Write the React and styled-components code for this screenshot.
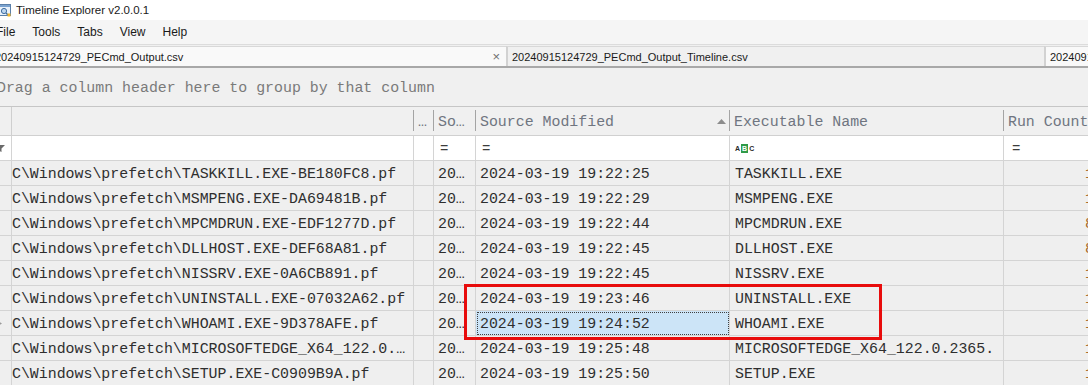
import React from "react";
import styled, { createGlobalStyle } from "styled-components";

const Global = createGlobalStyle`
  html, body {
    margin: 0;
    padding: 0;
    background: #ffffff;
    overflow: hidden;
  }
`;

const mono = `"Liberation Mono", "DejaVu Sans Mono", monospace`;
const sans = `"Liberation Sans", Arial, sans-serif`;

const Window = styled.div`
  position: relative;
  width: 1088px;
  height: 385px;
  overflow: hidden;
  background: #f0f0f0;
  font-family: ${sans};
`;

const TitleBar = styled.div`
  height: 20px;
  display: flex;
  align-items: center;
  gap: 5px;
  background: #ffffff;
  font-size: 11.5px;
  color: #1a1a1a;

  svg {
    margin-left: -2px;
  }
`;

const MenuBar = styled.div`
  height: 24px;
  display: flex;
  align-items: center;
  gap: 17px;
  background: #f5f5f5;
  font-size: 12px;
  color: #1a1a1a;

  span:first-child {
    margin-left: -4px;
  }
`;

const TabStrip = styled.div`
  height: 24px;
  display: flex;
  box-sizing: border-box;
  border-top: 1px solid #dcdcdc;
  border-bottom: 2px solid #a8a8a8;
  background: #f0f0f0;
  font-size: 11px;
  color: #1a1a1a;
`;

const Tab = styled.div`
  flex: 0 0 ${(p) => p.$w}px;
  margin-left: ${(p) => p.$ml || 0}px;
  display: flex;
  align-items: center;
  justify-content: space-between;
  box-sizing: border-box;
  padding: 0 4px;
  margin-top: 1px;
  border-top: 1px solid #d8d8d8;
  border-left: ${(p) => (p.$first ? "none" : "2px solid #d2d2d2")};
  background: ${(p) => (p.$active ? "#f9f9f9" : "#f0f0f0")};
  white-space: nowrap;
  overflow: hidden;
`;

const Close = styled.span`
  color: #707070;
  font-size: 13px;
  margin-right: 2px;
`;

const GroupPanel = styled.div`
  height: 39px;
  box-sizing: border-box;
  display: flex;
  align-items: center;
  padding-top: 2px;
  border-bottom: 1px solid #c6c6c6;
  font-family: ${mono};
  font-size: 14.9px;
  color: #7a7a7a;
  white-space: nowrap;

  span {
    margin-left: -3px;
  }
`;

const Grid = styled.div`
  display: grid;
  grid-template-columns: 12px 402px 20px 42px 254px 274px 97px;
  width: 1101px;
  font-family: ${mono};
  font-size: 14.9px;
`;

const HeadCell = styled.div`
  height: 29px;
  box-sizing: border-box;
  display: flex;
  align-items: center;
  justify-content: space-between;
  padding: 1px 4px 0;
  border-bottom: 1px solid #d0d0d0;
  color: #6f7580;
  white-space: nowrap;
  overflow: hidden;
  background: ${(p) =>
    p.$lead
      ? "#f0f0f0"
      : "linear-gradient(#a4a4a4, #a4a4a4) right 3px / 1px calc(100% - 7px) no-repeat, #f0f0f0"};
  border-right: ${(p) => (p.$lead ? "1px solid #cfcfcf" : "none")};
`;

const FilterCell = styled.div`
  height: 25px;
  box-sizing: border-box;
  display: flex;
  align-items: center;
  padding: 1px ${(p) => p.$pad ?? 6}px 0;
  background: #ffffff;
  border-right: 1px solid #d4d4d4;
  border-bottom: 1px solid #d4d4d4;
  color: #404040;
  overflow: hidden;
`;

const Cell = styled.div`
  height: 25px;
  box-sizing: border-box;
  display: flex;
  align-items: center;
  justify-content: ${(p) => (p.$right ? "flex-end" : "flex-start")};
  padding: 1px ${(p) => p.$pad ?? 4}px 0;
  background: ${(p) => (p.$selected ? "#cce4f7" : "#efefef")};
  border-right: 1px solid #d4d4d4;
  border-bottom: 1px solid #d4d4d4;
  outline: ${(p) => (p.$selected ? "1px dotted #404040" : "none")};
  outline-offset: -2px;
  color: ${(p) => (p.$num ? "#a6692a" : "#2e2e2e")};
  white-space: nowrap;
  overflow: hidden;
`;

const Eq = styled.span`
  font-size: 14px;
  color: #3c3c3c;
`;

const Abc = styled.span`
  display: inline-flex;
  align-items: center;
  font-family: ${sans};
  font-size: 7px;
  font-weight: bold;
  color: #2a2a2a;
  line-height: 1;

  b {
    display: inline-block;
    background: #2f9a48;
    color: #ffffff;
    padding: 1px 1px;
    margin: 0 1px;
  }
`;

const Highlight = styled.div`
  position: absolute;
  left: 464px;
  top: 284px;
  width: 418px;
  height: 56px;
  box-sizing: border-box;
  border: 3px solid #e80c0c;
  pointer-events: none;
`;

const AppIcon = () => (
  <svg width="13" height="14" viewBox="0 0 13 14">
    <rect x="0.5" y="1.5" width="12" height="11" fill="#e9f1fa" stroke="#5b7fa8" />
    <rect x="1" y="2" width="11" height="2" fill="#7aa2cf" />
    <circle cx="6" cy="8" r="2.6" fill="#bcd6f0" stroke="#3f6da0" strokeWidth="1" />
    <line x1="8" y1="10" x2="10" y2="12" stroke="#3f6da0" strokeWidth="1.4" />
    <rect x="9.5" y="10.5" width="3" height="3" fill="#f2b830" />
  </svg>
);

const SortUp = () => (
  <svg width="9" height="5" viewBox="0 0 9 5">
    <polygon points="0,5 4.5,0 9,5" fill="#8c8c8c" />
  </svg>
);

const Funnel = () => (
  <svg width="9" height="7" viewBox="0 0 9 7" style={{ marginLeft: -4 }}>
    <polygon points="0,0 9,0 5.5,3.5 5.5,7 3.5,6 3.5,3.5" fill="#6a6a6a" />
  </svg>
);

const RowMark = () => (
  <svg width="4" height="5" viewBox="0 0 4 5" style={{ marginLeft: -2 }}>
    <polygon points="0,0 4,2.5 0,5" fill="#9a9a9a" />
  </svg>
);

const rows = [
  ["C\\Windows\\prefetch\\TASKKILL.EXE-BE180FC8.pf", "2024-03-19 19:22:25", "TASKKILL.EXE", "1"],
  ["C\\Windows\\prefetch\\MSMPENG.EXE-DA69481B.pf", "2024-03-19 19:22:29", "MSMPENG.EXE", "1"],
  ["C\\Windows\\prefetch\\MPCMDRUN.EXE-EDF1277D.pf", "2024-03-19 19:22:44", "MPCMDRUN.EXE", "8"],
  ["C\\Windows\\prefetch\\DLLHOST.EXE-DEF68A81.pf", "2024-03-19 19:22:45", "DLLHOST.EXE", "8"],
  ["C\\Windows\\prefetch\\NISSRV.EXE-0A6CB891.pf", "2024-03-19 19:22:45", "NISSRV.EXE", "1"],
  ["C\\Windows\\prefetch\\UNINSTALL.EXE-07032A62.pf", "2024-03-19 19:23:46", "UNINSTALL.EXE", "1"],
  ["C\\Windows\\prefetch\\WHOAMI.EXE-9D378AFE.pf", "2024-03-19 19:24:52", "WHOAMI.EXE", "1"],
  ["C\\Windows\\prefetch\\MICROSOFTEDGE_X64_122.0.\u2026", "2024-03-19 19:25:48", "MICROSOFTEDGE_X64_122.0.2365.", "1"],
  ["C\\Windows\\prefetch\\SETUP.EXE-C0909B9A.pf", "2024-03-19 19:25:50", "SETUP.EXE", "1"],
];

const SELECTED = 6;

export default function App() {
  return (
    <Window>
      <Global />
      <TitleBar>
        <AppIcon />
        <span>Timeline Explorer v2.0.0.1</span>
      </TitleBar>
      <MenuBar>
        <span>File</span>
        <span>Tools</span>
        <span>Tabs</span>
        <span>View</span>
        <span>Help</span>
      </MenuBar>
      <TabStrip>
        <Tab $w={515} $ml={-9} $first $active>
          <span>20240915124729_PECmd_Output.csv</span>
          <Close>×</Close>
        </Tab>
        <Tab $w={538}>
          <span>20240915124729_PECmd_Output_Timeline.csv</span>
        </Tab>
        <Tab $w={120} $active>
          <span>20240915124729_PECmd_Output_Timeline.csv</span>
        </Tab>
      </TabStrip>
      <GroupPanel>
        <span>Drag a column header here to group by that column</span>
      </GroupPanel>
      <Grid>
        <HeadCell $lead />
        <HeadCell />
        <HeadCell>…</HeadCell>
        <HeadCell>So…</HeadCell>
        <HeadCell>
          <span>Source Modified</span>
          <SortUp />
        </HeadCell>
        <HeadCell>Executable Name</HeadCell>
        <HeadCell>Run Count</HeadCell>

        <FilterCell $pad={0}>
          <Funnel />
        </FilterCell>
        <FilterCell />
        <FilterCell />
        <FilterCell>
          <Eq>=</Eq>
        </FilterCell>
        <FilterCell>
          <Eq>=</Eq>
        </FilterCell>
        <FilterCell $pad={5}>
          <Abc>
            A<b>B</b>C
          </Abc>
        </FilterCell>
        <FilterCell $pad={8}>
          <Eq>=</Eq>
        </FilterCell>

        {rows.map((r, i) => (
          <React.Fragment key={r[0]}>
            <Cell $pad={0}>{i === SELECTED && <RowMark />}</Cell>
            <Cell $pad={0}>{r[0]}</Cell>
            <Cell />
            <Cell>20…</Cell>
            <Cell $selected={i === SELECTED}>{r[1]}</Cell>
            <Cell $pad={5}>{r[2]}</Cell>
            <Cell $right $num $pad={6}>
              {r[3]}
            </Cell>
          </React.Fragment>
        ))}
      </Grid>
      <Highlight />
    </Window>
  );
}
